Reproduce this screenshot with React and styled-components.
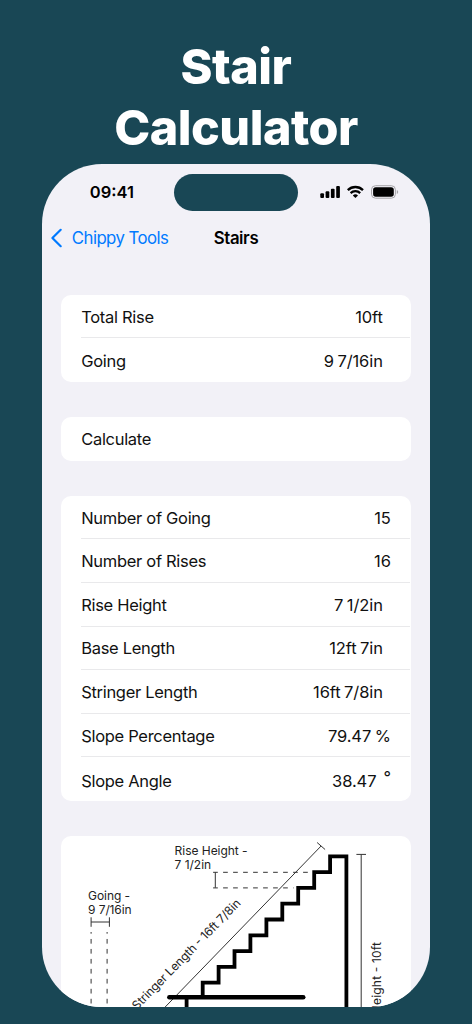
import React from 'react';
import styled, { createGlobalStyle } from 'styled-components';

const inputs = [
  { label: 'Total Rise', value: '10ft', inset: true },
  { label: 'Going', value: '9 7/16in', inset: true },
];

const results = [
  { label: 'Number of Going', value: '15' },
  { label: 'Number of Rises', value: '16' },
  { label: 'Rise Height', value: '7 1/2in', inset: true },
  { label: 'Base Length', value: '12ft 7in', inset: true },
  { label: 'Stringer Length', value: '16ft 7/8in', inset: true },
  { label: 'Slope Percentage', value: '79.47 %' },
  { label: 'Slope Angle', value: '38.47', degrees: true },
];

const Rows = ({ items }) => (
  <Card>
    {items.map((item) => (
      <Row key={item.label} $low={item.degrees}>
        <Label>{item.label}</Label>
        <Value $inset={item.inset}>
          {item.value}
          {item.degrees && <Degree>°</Degree>}
        </Value>
      </Row>
    ))}
  </Card>
);

const StatusIcons = () => (
  <svg width="80" height="16" viewBox="0 0 80 16">
    <rect x="0.3" y="9.2" width="3.7" height="4.8" rx="1" />
    <rect x="5.6" y="7.2" width="3.7" height="6.8" rx="1" />
    <rect x="10.9" y="4.7" width="3.7" height="9.3" rx="1" />
    <rect x="16.2" y="2" width="3.7" height="12" rx="1" />
    <g fill="none" stroke="#000" strokeWidth="2.3">
      <path d="M27.8 6.1a10.9 10.9 0 0 1 15.2 0" />
      <path d="M30.6 9.1a6.9 6.9 0 0 1 9.6 0" />
    </g>
    <path d="M35.4 14.1l-2.6-2.6a3.8 3.8 0 0 1 5.2 0z" />
    <rect x="51.5" y="1.7" width="23.9" height="12.5" rx="4" fill="none" stroke="#a5a4a8" />
    <rect x="53.1" y="3.2" width="20.7" height="9.5" rx="2.6" />
    <path d="M76.8 5.9q1.4.5 1.4 2t-1.4 2z" fill="#a5a4a8" />
  </svg>
);

// one step is 15.93 wide and 15.8 high, going down from the top landing
const stairPath = () => {
  let d = 'M284.8 180V20.3H268.5';
  for (let i = 1; i <= 8; i++) {
    d += `V${(20.3 + i * 15.8).toFixed(1)}H${(268.5 - i * 15.93).toFixed(1)}`;
  }
  return d + 'V161';
};

const Diagram = () => (
  <Drawing viewBox="-0.6 0 349 171">
    <g fontSize="12">
      <text x="113" y="19" textLength="73">Rise Height -</text>
      <text x="113" y="33" textLength="36.5">7 1/2in</text>
      <text x="26.5" y="63.8" textLength="42">Going -</text>
      <text x="26.5" y="78" textLength="43.5">9 7/16in</text>
      <text transform="translate(75.5 174.5) rotate(-45.6)" textLength="149">Stringer Length - 16ft 7/8in</text>
      <text transform="translate(319 106) rotate(-90)" textAnchor="end" textLength="72">Height - 10ft</text>
    </g>
    <g fill="none" stroke="#333">
      <path d="M29.5 81.3v9.5M47.8 81.3v9.5M29.5 86h18.3" />
      <path d="M153.7 36.3v15.4M151.5 36.3h4.7M151.5 51.9h4.7" />
      <path d="M103.3 171.3L259.5 10M255.5 6.5l8 7" />
      <path d="M299.6 18.4V172M294.8 18.4h9.6" />
      <path d="M29.5 96V172M45.5 96V172" strokeDasharray="4.7 5.27" strokeDashoffset="3" />
      <path d="M161.5 36.3H247M161.5 51.9H232" strokeDasharray="4.7 5.3" />
    </g>
    <g fill="none" stroke="#000">
      <path d={stairPath()} strokeWidth="3.8" />
      <path d="M125 161v12" strokeWidth="3.8" />
      <path d="M107.8 161.2H241.6" strokeWidth="4.6" strokeLinecap="round" />
    </g>
  </Drawing>
);

const App = () => {
  return (
    <Page>
      <GlobalStyle />
      <Title>
        <span>Stair</span>
        <span>Calculator</span>
      </Title>
      <Phone>
        <StatusBar>
          <Clock>09:41</Clock>
          <Island />
          <StatusIcons />
        </StatusBar>
        <NavBar>
          <BackButton>
            <svg width="13" height="20" viewBox="0 0 13 20">
              <path d="M10.7 1.8L2.4 10l8.3 8.2" fill="none" stroke="#007aff" strokeWidth="2.2" strokeLinecap="round" strokeLinejoin="round" />
            </svg>
            <span>Chippy Tools</span>
          </BackButton>
          <NavTitle>Stairs</NavTitle>
          <div />
        </NavBar>
        <Content>
          <Rows items={inputs} />
          <Card>
            <Row as="button">
              <Label>Calculate</Label>
            </Row>
          </Card>
          <Rows items={results} />
          <Card>
            <Diagram />
          </Card>
        </Content>
      </Phone>
    </Page>
  );
};

const GlobalStyle = createGlobalStyle`
  * {
    box-sizing: border-box;
  }

  body {
    margin: 0;
    background: #194755;
    font-family: Inter, "Liberation Sans", sans-serif;
  }
`;

const Page = styled.div`
  display: flex;
  flex-direction: column;
  align-items: center;
  height: 1024px;
  padding-top: 35.5px;
  overflow: hidden;
`;

const Title = styled.h1`
  display: flex;
  flex-direction: column;
  align-items: center;
  height: 128.5px;
  margin: 0;
  flex-shrink: 0;
  font-size: 48.5px;
  font-weight: 800;
  line-height: 61.4px;
  letter-spacing: -0.5px;
  color: #fff;
`;

const Phone = styled.div`
  display: flex;
  flex-direction: column;
  width: 388.4px;
  height: 843px;
  border-radius: 60px;
  background: #f2f1f7;
  overflow: hidden;
`;

const StatusBar = styled.div`
  display: grid;
  grid-template-columns: 132px 124px 1fr;
  align-items: center;
  flex-shrink: 0;
  height: 56px;

  > svg {
    margin-left: 22px;
  }
`;

const Clock = styled.div`
  padding-left: 48px;
  font-size: 16.5px;
  font-weight: 600;
  letter-spacing: 0;
`;

const Island = styled.div`
  height: 37px;
  margin-top: 1px;
  border-radius: 19px;
  background: #194755;
`;

const NavBar = styled.div`
  display: grid;
  grid-template-columns: 1fr auto 1fr;
  align-items: center;
  flex-shrink: 0;
  height: 36px;
  font-size: 16.8px;
`;

const BackButton = styled.button`
  display: flex;
  align-items: center;
  gap: 9px;
  padding: 0 0 0 8px;
  border: none;
  background: none;
  font: inherit;
  letter-spacing: -0.55px;
  color: #007aff;
  white-space: nowrap;
`;

const NavTitle = styled.div`
  font-weight: 600;
  letter-spacing: -0.4px;
`;

const Content = styled.div`
  display: flex;
  flex-direction: column;
  gap: 35.1px;
  padding: 38.9px 19.7px 0;
`;

const Card = styled.div`
  flex-shrink: 0;
  border-radius: 10px;
  background: #fff;
  overflow: hidden;
`;

const Row = styled.div`
  display: flex;
  align-items: center;
  justify-content: space-between;
  width: calc(100% - 19.7px);
  height: 43.6px;
  margin-left: 19.7px;
  padding: ${(props) => (props.$low ? '3px' : '1px')} 19.7px 0 0;
  border: none;
  background: none;
  font-family: inherit;
  font-size: 16.5px;
  letter-spacing: -0.3px;
  color: #111;

  &:not(:last-child) {
    border-bottom: 1px solid #e9e9eb;
  }
`;

const Label = styled.span``;

const Value = styled.span`
  display: flex;
  padding-right: ${(props) => (props.$inset ? '8px' : '0')};
  letter-spacing: -0.1px;
  word-spacing: -1px;
`;

const Degree = styled.span`
  margin: -4px 0 0 7px;
`;

const Drawing = styled.svg`
  display: block;
  width: 349px;
  height: 171px;
  fill: #222;
`;

export default App;
